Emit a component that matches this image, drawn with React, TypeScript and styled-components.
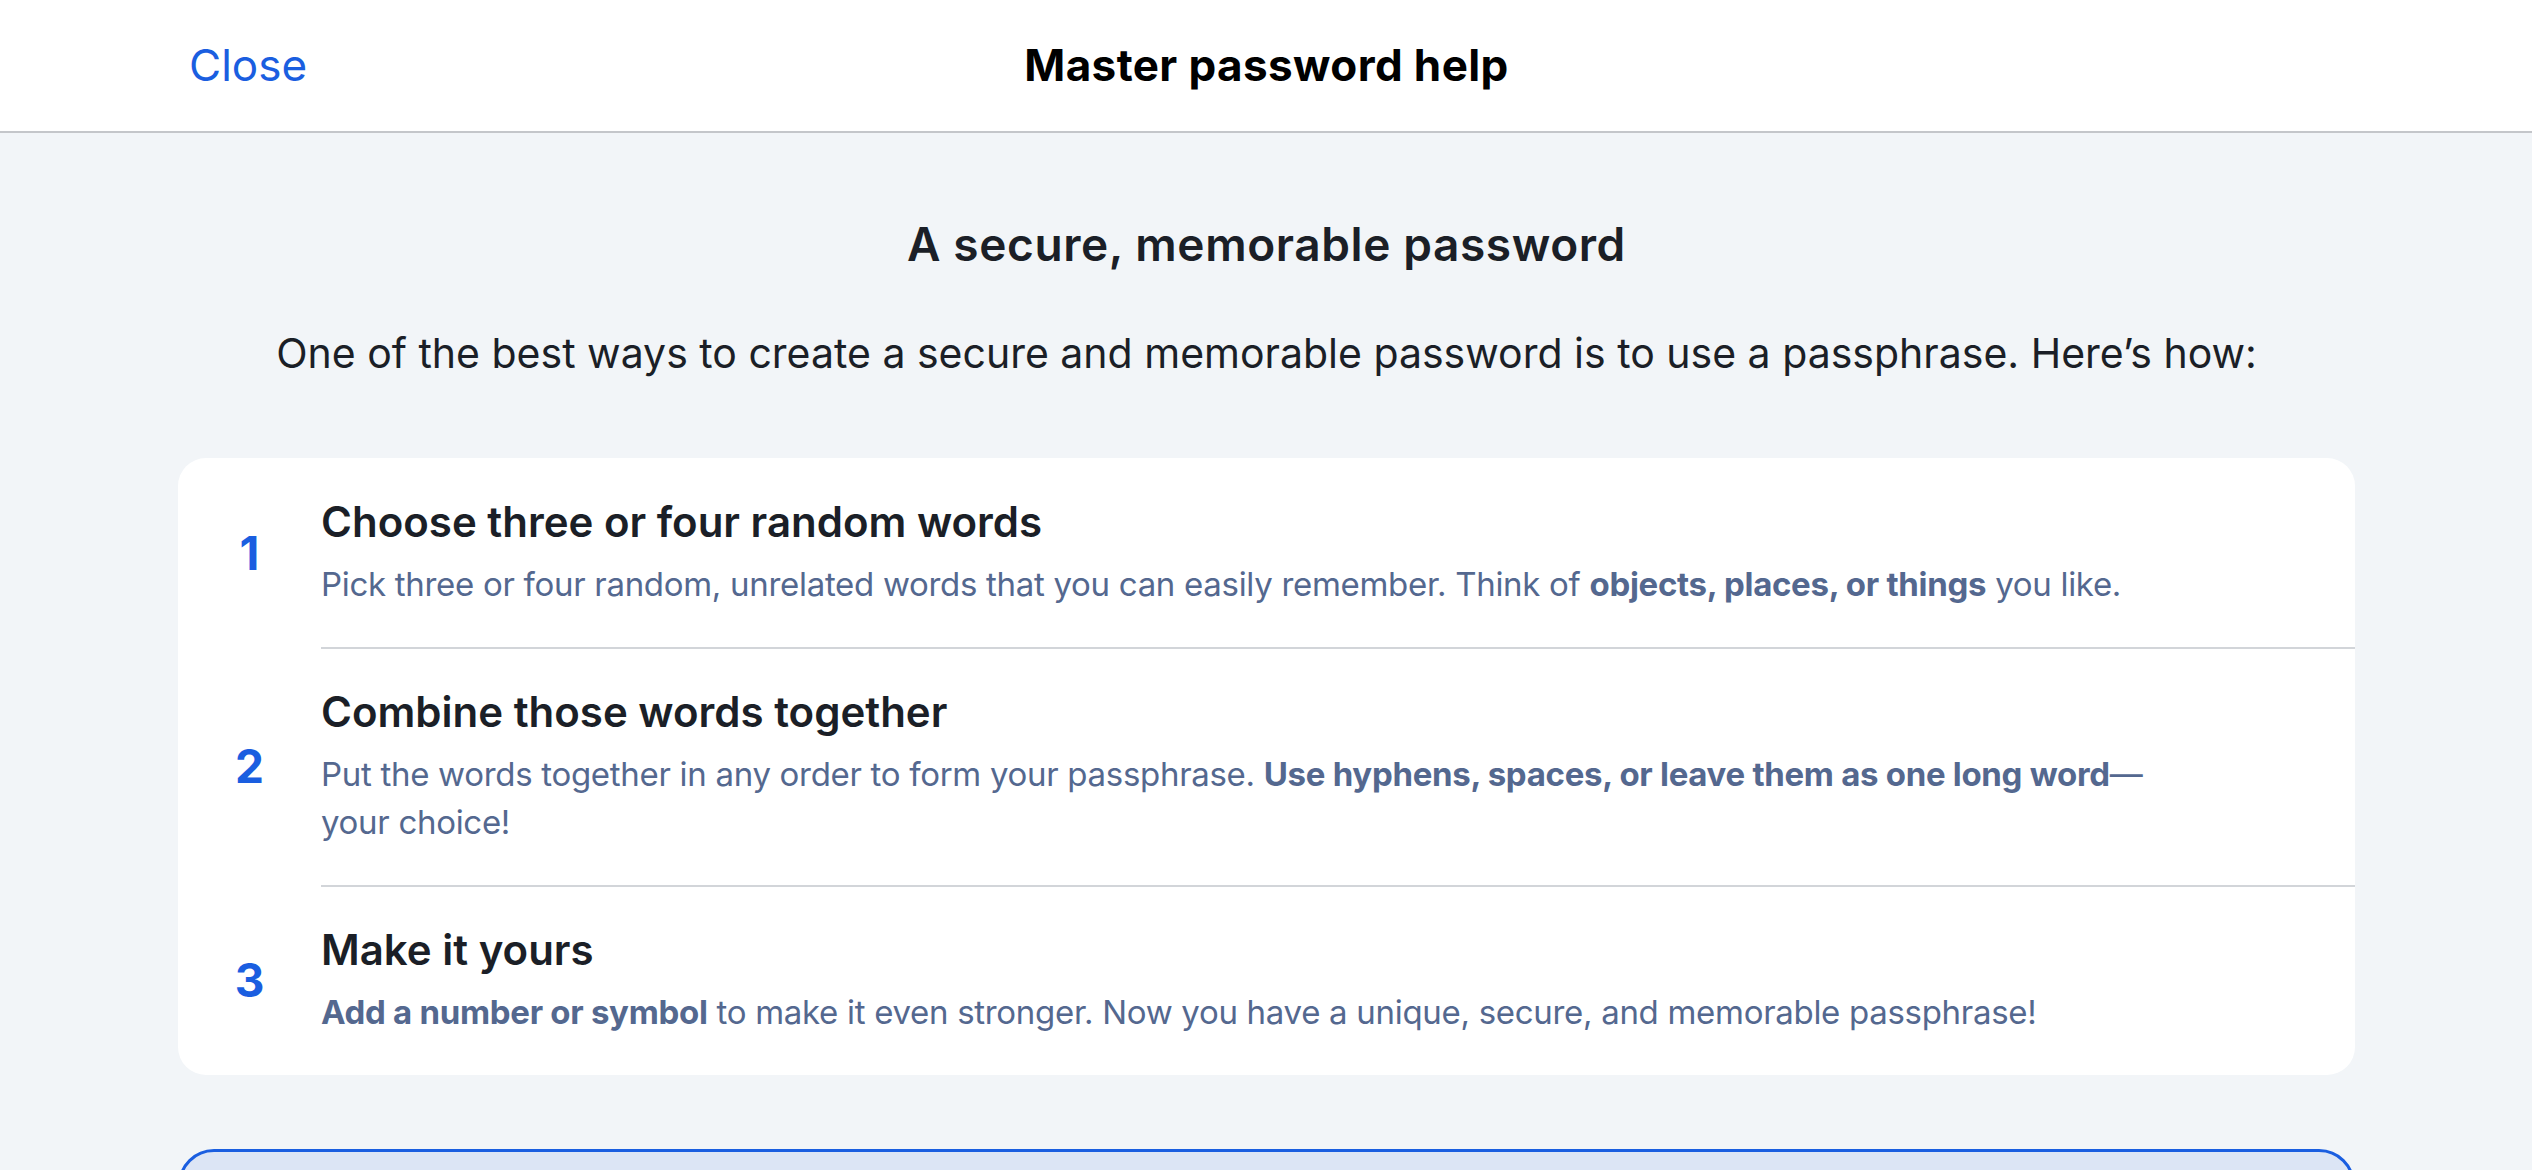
import React from 'react';
import styled, { createGlobalStyle } from 'styled-components';

const GlobalStyle = createGlobalStyle`
  html, body {
    margin: 0;
    padding: 0;
    background: #f2f5f8;
  }
  body {
    font-family: Inter, 'Noto Sans', sans-serif;
    color: #1b1f27;
  }
  * {
    box-sizing: border-box;
  }
`;

type Step = {
  num: number;
  title: string;
  body: React.ReactNode;
};

const steps: Step[] = [
  {
    num: 1,
    title: 'Choose three or four random words',
    body: (
      <>
        Pick three or four random, unrelated words that you can easily remember. Think of{' '}
        <strong>objects, places, or things</strong> you like.
      </>
    ),
  },
  {
    num: 2,
    title: 'Combine those words together',
    body: (
      <>
        Put the words together in any order to form your passphrase.{' '}
        <strong>Use hyphens, spaces, or leave them as one long word</strong>—your choice!
      </>
    ),
  },
  {
    num: 3,
    title: 'Make it yours',
    body: (
      <>
        <strong>Add a number or symbol</strong> to make it even stronger. Now you have a unique, secure, and
        memorable passphrase!
      </>
    ),
  },
];

/** 마스터 비밀번호 도움말 */
const App = () => {
  return (
    <>
      <GlobalStyle />
      <Header>
        <CloseButton>Close</CloseButton>
        <HeaderTitle>Master password help</HeaderTitle>
        <span />
      </Header>
      <Main>
        <Title>A secure, memorable password</Title>
        <Intro>
          One of the best ways to create a secure and memorable password is to use a passphrase. Here’s how:
        </Intro>
        <StepCard>
          {steps.map((step, i) => (
            <StepRow key={step.num}>
              <StepNum>{step.num}</StepNum>
              <StepBody $divider={i > 0}>
                <StepTitle>{step.title}</StepTitle>
                <StepText>{step.body}</StepText>
              </StepBody>
            </StepRow>
          ))}
        </StepCard>
        <TipBox />
      </Main>
    </>
  );
};
export default App;

const Header = styled.header`
  height: 133px;
  background: #ffffff;
  border-bottom: 2px solid #c4c6ca;
  display: grid;
  grid-template-columns: 1fr auto 1fr;
  align-items: center;
  padding: 0 0 2px 189px;
`;

const CloseButton = styled.button`
  justify-self: start;
  background: none;
  border: none;
  padding: 0;
  font-family: inherit;
  font-size: 44px;
  font-weight: 400;
  color: #1a5ee0;
  cursor: pointer;
`;

const HeaderTitle = styled.h1`
  margin: 0;
  font-size: 44px;
  letter-spacing: 0.4px;
  font-weight: 700;
  color: #000000;
  transform: translateX(-94px);
`;

const Main = styled.main`
  display: flex;
  flex-direction: column;
  align-items: center;
  padding: 0 177px 0 178px;
`;

const Title = styled.h2`
  margin: 83px 0 0;
  font-size: 46px;
  line-height: 56px;
  letter-spacing: 0.6px;
  font-weight: 600;
  color: #1b1f27;
`;

const Intro = styled.p`
  margin: 56px 0 0;
  font-size: 41px;
  line-height: 50px;
  font-weight: 400;
  color: #1b1f27;
`;

const StepCard = styled.section`
  width: 100%;
  margin-top: 80px;
  background: #ffffff;
  border-radius: 28px;
  overflow: hidden;
`;

const StepRow = styled.div`
  display: grid;
  grid-template-columns: 143px 1fr;
  align-items: stretch;
`;

const StepNum = styled.div`
  display: flex;
  align-items: center;
  justify-content: center;
  font-size: 46px;
  font-weight: 700;
  color: #1a5ee0;
`;

const StepBody = styled.div<{ $divider: boolean }>`
  border-top: ${({ $divider }) => ($divider ? '2px solid #d2d5d9' : 'none')};
  padding: ${({ $divider }) => ($divider ? '37px' : '38px')} 190px 39px 0;
  display: flex;
  flex-direction: column;
  gap: 12px;
`;

const StepTitle = styled.h3`
  margin: 0;
  font-size: 42px;
  line-height: 52px;
  font-weight: 600;
  color: #1b1f27;
`;

const StepText = styled.p`
  margin: 0;
  font-size: 33px;
  line-height: 48px;
  letter-spacing: -0.3px;
  font-weight: 400;
  color: #54688f;

  strong {
    font-weight: 700;
  }
`;

const TipBox = styled.div`
  width: 100%;
  height: 220px;
  margin-top: 74px;
  background: #dce5f5;
  border: 3px solid #1a5ee0;
  border-radius: 36px;
`;
